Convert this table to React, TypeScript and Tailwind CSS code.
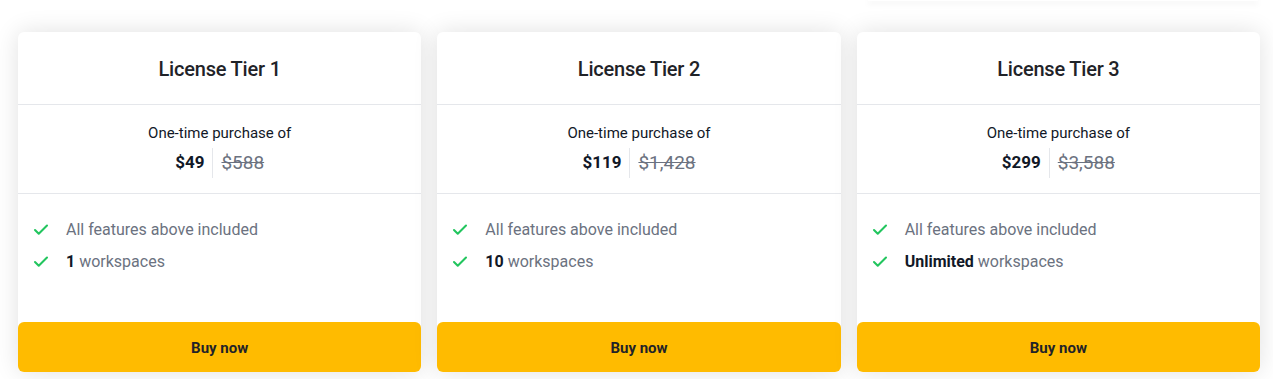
import { Check } from 'lucide-react';

type Tier = {
  name: string;
  price: string;
  oldPrice: string;
  seats: string;
};

const tiers: Tier[] = [
  { name: 'License Tier 1', price: '$49', oldPrice: '$588', seats: '1' },
  { name: 'License Tier 2', price: '$119', oldPrice: '$1,428', seats: '10' },
  { name: 'License Tier 3', price: '$299', oldPrice: '$3,588', seats: 'Unlimited' },
];

function Feature({ children }: { children: React.ReactNode }) {
  return (
    <li className="flex items-center h-8 gap-[16px]">
      <Check className="w-[18px] h-[18px] text-[#22c55e]" strokeWidth={2.75} />
      <span className="text-[16px] text-[#6b7280]">{children}</span>
    </li>
  );
}

function TierCard({ tier }: { tier: Tier }) {
  return (
    <div className="flex flex-col h-[340px] bg-white rounded-md shadow-[0_0_24px_rgba(0,0,0,0.12)]">
      <div className="h-[73px] pt-[2px] flex items-center justify-center border-b border-[#e5e7eb]">
        <h3 className="text-[20px] font-medium text-[#1f2328] tracking-[-0.2px]">{tier.name}</h3>
      </div>

      <div className="h-[89px] flex flex-col items-center pt-[18px] border-b border-[#e5e7eb]">
        <p className="text-[15px] text-[#111827] leading-5">One-time purchase of</p>
        <div className="flex items-center h-[30px] mt-[5px]">
          <span className="pr-[8px] text-[17px] font-bold text-[#111827]">{tier.price}</span>
          <span className="pl-[8px] h-full flex items-center border-l border-[#e5e7eb] text-[19px] text-[#6b7280] line-through">
            {tier.oldPrice}
          </span>
        </div>
      </div>

      <ul className="px-[14px] pt-[20px] flex-1">
        <Feature>All features above included</Feature>
        <Feature>
          <b className="font-bold text-[#111827]">{tier.seats}</b> workspaces
        </Feature>
      </ul>

      <button className="h-[50px] w-full pt-[3px] rounded-md bg-[#ffbb00] text-[15px] font-bold text-[#1f2328]">
        Buy now
      </button>
    </div>
  );
}

export default function App() {
  return (
    <div className="w-[1273px] h-[379px] bg-white overflow-hidden font-['Roboto',sans-serif]">
      {/* bottom edge of the panel above */}
      <div className="flex justify-end pr-[15px]">
        <div className="w-[390px] h-[1px] bg-white shadow-[0_2px_6px_rgba(0,0,0,0.18)]" />
      </div>

      <div className="grid grid-cols-3 gap-4 pl-[18px] pr-[13px] pt-[31px]">
        {tiers.map((t) => (
          <TierCard key={t.name} tier={t} />
        ))}
      </div>
    </div>
  );
}
